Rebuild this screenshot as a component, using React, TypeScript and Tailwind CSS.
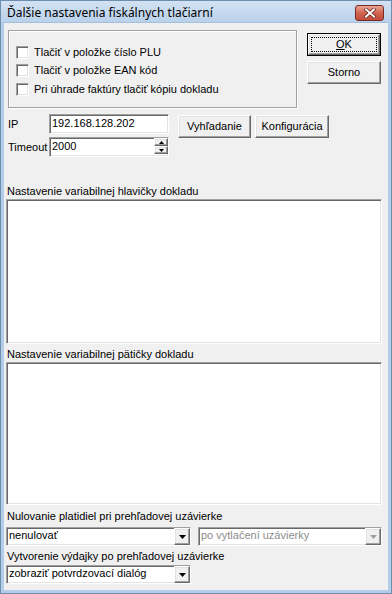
const raised =
  "border border-t-white border-l-white border-b-[#696969] border-r-[#696969] shadow-[inset_-1px_-1px_0_#A0A0A0,inset_1px_1px_0_#E3E3E3] bg-[#F0F0F0]";
const sunken =
  "border border-t-[#A0A0A0] border-l-[#A0A0A0] border-b-white border-r-white shadow-[inset_1px_1px_0_#696969,inset_-1px_-1px_0_#E3E3E3] bg-white";

function Check({ label }: { label: string }) {
  return (
    <div className="flex items-center h-[18.5px]">
      <div className={`${sunken} w-[13px] h-[13px]`} />
      <span className="ml-[5px] leading-[13px]">{label}</span>
    </div>
  );
}

function Combo({ text, disabled, className }: { text: string; disabled?: boolean; className: string }) {
  return (
    <div className={`${sunken} h-[19px] flex items-stretch ${className}`}>
      <span className={`flex-1 pl-[2px] leading-[15px] ${disabled ? "text-[#8D8D8D]" : ""}`}>{text}</span>
      <div className={`${raised} w-[16px] flex items-center justify-center`}>
        <svg width="7" height="4" viewBox="0 0 7 4">
          <path d="M0 0h7L3.5 4z" fill={disabled ? "#A0A0A0" : "#000"} />
        </svg>
      </div>
    </div>
  );
}

function Button({ children, className }: { children: React.ReactNode; className: string }) {
  return (
    <div className={`${raised} flex items-center justify-center leading-[13px] ${className}`}>{children}</div>
  );
}

export default function App() {
  return (
    <div className="w-[392px] h-[594px] bg-[#B4CEEA] border border-[#6F8FAF] flex flex-col px-[3px] pb-[3px] font-['Liberation_Sans',Arial,sans-serif] text-[11px] text-black">
      {/* title bar */}
      <div className="h-[21px] -mx-[3px] px-[6px] flex items-center bg-gradient-to-b from-[#D3E2F3] to-[#B9D1EA]">
        <span className="flex-1 text-[12px] font-['Noto_Sans',sans-serif] pt-[2px]">Ďalšie nastavenia fiskálnych tlačiarní</span>
        <div className="w-[29px] h-[16px] mt-[3px] mr-[1px] rounded-[3px] border border-[#7A2A22] bg-gradient-to-b from-[#E8A493] via-[#D0634F] to-[#C04C3A] flex items-center justify-center">
          <svg width="12" height="10" viewBox="0 0 12 10">
            <path d="M2 1.5L10 8.5M10 1.5L2 8.5" stroke="#5A1A14" strokeWidth="3.4" strokeLinecap="square" />
            <path d="M2 1.5L10 8.5M10 1.5L2 8.5" stroke="#fff" strokeWidth="2" strokeLinecap="square" />
          </svg>
        </div>
      </div>

      {/* client area */}
      <div className="flex-1 bg-[#F0F0F0] border-t border-[#A6BFDA] flex flex-col">
        <div className="flex mt-[7px]">
          <div className="ml-[4px] w-[289px] h-[78px] border border-[#A0A0A0] shadow-[inset_1px_1px_0_#fff,1px_1px_0_#fff] pt-[12px] pl-[7px]">
            <Check label="Tlačiť v položke číslo PLU" />
            <Check label="Tlačiť v položke EAN kód" />
            <Check label="Pri úhrade faktúry tlačiť kópiu dokladu" />
          </div>
          <div className="ml-[10px] mt-[3px] flex flex-col gap-[5px]">
            <div className="w-[74px] h-[23px] border border-black">
              <div className={`${raised} w-full h-full p-[2px]`}>
                <div className="w-full h-full border border-dotted border-black flex items-center justify-center leading-[13px]">
                  <span>
                    <span className="underline">O</span>K
                  </span>
                </div>
              </div>
            </div>
            <Button className="w-[74px] h-[23px]">Storno</Button>
          </div>
        </div>

        <div className="flex mt-[6px]">
          <div className="flex flex-col gap-[3px]">
            <div className="flex items-center h-[20px]">
              <span className="w-[45px] pl-[4px] whitespace-nowrap">IP</span>
              <div className={`${sunken} w-[120px] h-[20px] pl-[2px] leading-[16px]`}>192.168.128.202</div>
            </div>
            <div className="flex items-center h-[20px]">
              <span className="w-[45px] pl-[4px] whitespace-nowrap">Timeout</span>
              <div className={`${sunken} w-[120px] h-[20px] flex items-stretch`}>
                <span className="flex-1 pl-[2px] leading-[16px]">2000</span>
                <div className="w-[14px] flex flex-col">
                  <div className={`${raised} h-[8px] flex items-center justify-center`}>
                    <svg width="5" height="3" viewBox="0 0 5 3">
                      <path d="M0 3h5L2.5 0z" fill="#000" />
                    </svg>
                  </div>
                  <div className={`${raised} h-[8px] flex items-center justify-center`}>
                    <svg width="5" height="3" viewBox="0 0 5 3">
                      <path d="M0 0h5L2.5 3z" fill="#000" />
                    </svg>
                  </div>
                </div>
              </div>
            </div>
          </div>
          <Button className="ml-[9px] mt-[1px] w-[73px] h-[23px]">Vyhľadanie</Button>
          <Button className="ml-[4px] mt-[1px] w-[74px] h-[23px]">Konfigurácia</Button>
        </div>

        <div className="mt-[28px] pl-[3px] leading-[13px]">Nastavenie variabilnej hlavičky dokladu</div>
        <div className={`${sunken} ml-[2px] mt-[1px] w-[376px] h-[145px]`} />

        <div className="mt-[4px] pl-[3px] leading-[13px]">Nastavenie variabilnej pätičky dokladu</div>
        <div className={`${sunken} ml-[2px] mt-[1px] w-[376px] h-[143px]`} />

        <div className="mt-[5px] pl-[3px] leading-[13px]">Nulovanie platidiel pri prehľadovej uzávierke</div>
        <div className="flex mt-[4px] ml-[2px] gap-[7px]">
          <Combo className="w-[185px]" text="nenulovať" />
          <Combo className="w-[184px]" text="po vytlačení uzávierky" disabled />
        </div>

        <div className="mt-[4px] pl-[3px] leading-[13px]">Vytvorenie výdajky po prehľadovej uzávierke</div>
        <Combo className="ml-[2px] mt-[2px] w-[185px]" text="zobraziť potvrdzovací dialóg" />
      </div>
    </div>
  );
}
